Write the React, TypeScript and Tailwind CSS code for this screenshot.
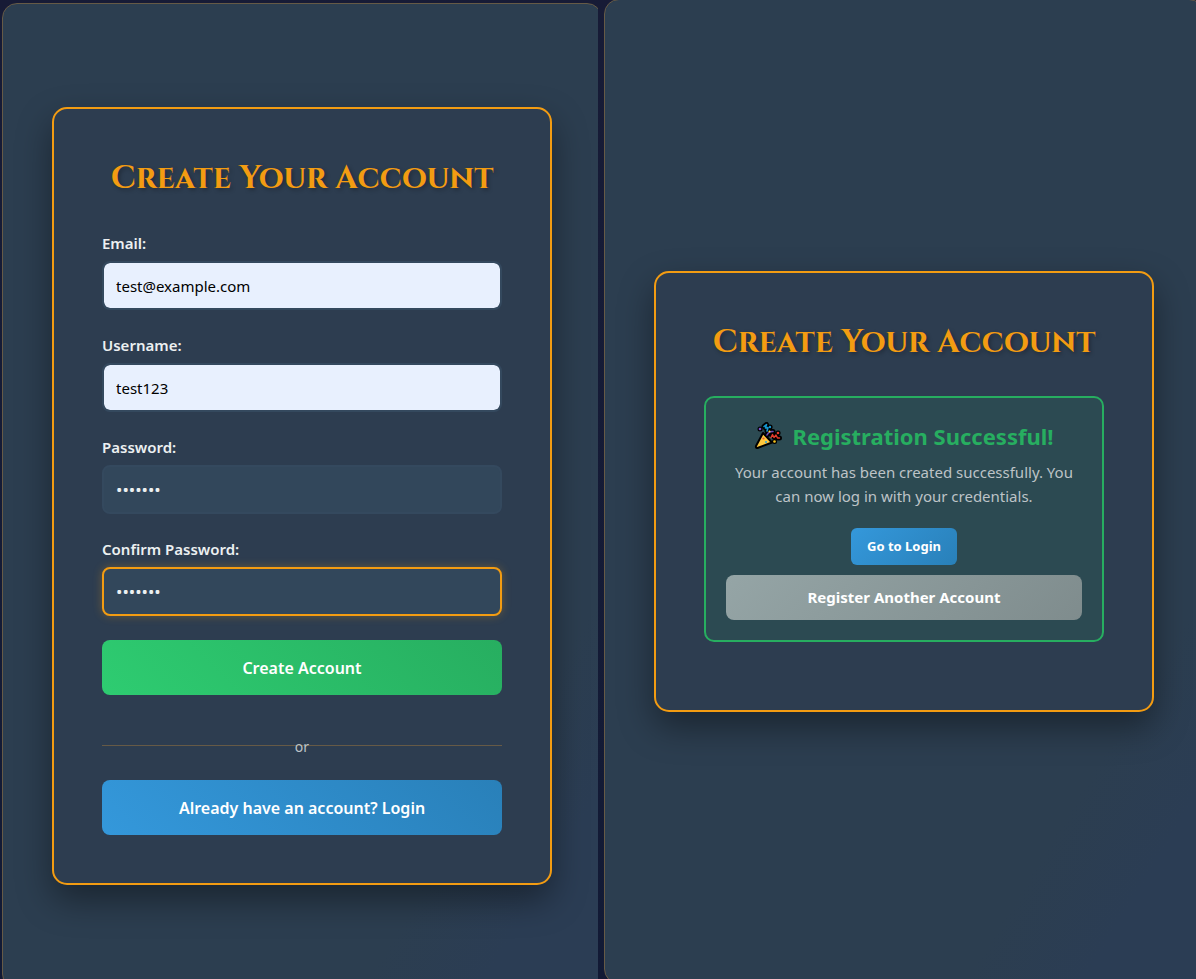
import type { ReactNode } from "react";

function Title() {
  return (
    <h1 className="text-center font-['Cinzel','Liberation_Serif',serif] text-[32px] leading-11 font-bold whitespace-nowrap text-[#f39c12] [text-shadow:2px_2px_4px_rgba(0,0,0,0.3)]">
      Create Your Account
    </h1>
  );
}

function Card({ children }: { children: ReactNode }) {
  return (
    <main className="w-full max-w-[500px] rounded-[15px] border-2 border-[#f39c12] bg-[#2d3d50] p-12 shadow-[0_15px_35px_rgba(0,0,0,0.4)]">
      <Title />
      {children}
    </main>
  );
}

function Panel({ className, children }: { className: string; children: ReactNode }) {
  return (
    <section
      className={`flex flex-1 items-center justify-center rounded-[15px] border border-[#665a46] bg-linear-to-br from-[#2c3e50] from-80% to-[#2b3d54] to-90% px-4 ${className}`}
    >
      {children}
    </section>
  );
}

type FieldProps = { id: string; label: string; type: string; value: string; look: string };

function Field({ id, label, type, value, look }: FieldProps) {
  return (
    <div className="mb-6">
      <label htmlFor={id} className="mb-[7px] block text-[15px] leading-[22px] font-semibold text-[#ecf0f1]">
        {label}
      </label>
      <input
        id={id}
        type={type}
        defaultValue={value}
        className={`block h-[49px] w-full rounded-lg border-2 px-3 outline-none ${look}`}
      />
    </div>
  );
}

const filled = "border-[#34495e] bg-[#e8f0fe] bg-clip-padding text-[15px] text-black";
const plain = "border-[#34495e] bg-[#32475b] text-[17px] text-[#ecf0f1]";
const active = "border-[#f39c12] bg-[#32475b] text-[17px] text-[#ecf0f1] shadow-[0_0_10px_rgba(243,156,18,0.3)]";

function PartyPopper() {
  return (
    <svg viewBox="0 0 28 28" className="size-7 shrink-0" aria-hidden="true">
      <g strokeLinecap="round" strokeLinejoin="round" fill="none">
        <g stroke="#000" strokeWidth="5">
          <path d="M10 4.5 12.5 2.5 11.5 6 14 5.5 13 9" />
          <path d="M17 12.5 19 11 20 15 22.5 13 23.5 16 25.5 16" />
          <path d="M13 13q2-4 6-3.500M6 7h.1M16 5h.1M15.500 9.500h.1M20.500 19.500h.1M24 11h.1" />
        </g>
        <path d="M9 11 18 20.500 3.500 26Q1.500 26.500 2 24Z" fill="#ffc83d" stroke="#000" strokeWidth="2" />
        <path d="M10 4.500 12.500 2.500 11.500 6 14 5.500 13 9" stroke="#1596cf" strokeWidth="1.600" />
        <path d="M17 15.500 18.500 12.500 20 15.500 22 13 23.500 16 25.500 16" stroke="#e43b2c" strokeWidth="1.400" />
        <path d="M13 13q2-4 6-3.500" stroke="#6b4bb5" strokeWidth="1.600" />
      </g>
      <circle cx="6" cy="7" r="1.300" fill="#7651c8" />
      <circle cx="16" cy="5" r="1.200" fill="#1596cf" />
      <circle cx="15.500" cy="9.500" r="1" fill="#ffe03a" />
      <circle cx="20.500" cy="19.500" r="1.300" fill="#f7c51d" />
      <circle cx="24" cy="11" r="1.300" fill="#e43b2c" />
      <circle cx="9.500" cy="16.500" r="1.100" fill="#e85b3d" />
      <circle cx="12" cy="20" r="1.100" fill="#33a9dc" />
    </svg>
  );
}

export default function App() {
  return (
    <div className="grid h-screen grid-cols-2 overflow-hidden bg-linear-to-b from-[#171b36] to-[#121a35] font-['Segoe_UI','Noto_Sans',sans-serif]">
      <div className="flex min-w-0 overflow-hidden pl-0.5">
        <Panel className="mt-[3px] -mr-1 -mb-[10px]">
          <Card>
            <form className="mt-[31px]" onSubmit={(event) => event.preventDefault()}>
              <Field id="email" label="Email:" type="email" value="test@example.com" look={filled} />
              <Field id="username" label="Username:" type="text" value="test123" look={filled} />
              <Field id="password" label="Password:" type="password" value="test123" look={plain} />
              <Field id="confirm" label="Confirm Password:" type="password" value="test123" look={active} />
              <button
                type="submit"
                className="block h-[55px] w-full rounded-lg bg-linear-[45deg] from-[#2ecc71] to-[#27ae60] text-base font-semibold text-white"
              >
                Create Account
              </button>
              <div className="relative mt-[50px] mb-[34px] h-px bg-[#665a46]">
                <span className="absolute inset-x-0 -top-2 text-center text-sm leading-5 text-[#bdc3c7]">or</span>
              </div>
              <button
                type="button"
                className="block h-[55px] w-full rounded-lg bg-linear-[45deg] from-[#3498db] to-[#2980b9] text-base font-semibold text-white"
              >
                Already have an account? Login
              </button>
            </form>
          </Card>
        </Panel>
      </div>
      <div className="flex min-w-0 overflow-hidden pl-1.5">
        <Panel className="-mt-px -mr-2 -mb-[5px]">
          <Card>
            <div className="mt-[31px] mb-5 flex flex-col items-center rounded-[10px] border-2 border-[#27ae60] bg-[#27ae60]/12 p-5">
              <h2 className="flex h-9 items-center gap-[10px] text-[22px] font-bold whitespace-nowrap text-[#27ae60]">
                <PartyPopper />
                Registration Successful!
              </h2>
              <p className="mt-1.5 text-center text-[15px] leading-6 text-[#bdc3c7]">
                Your account has been created successfully. You can now log in with your credentials.
              </p>
              <button
                type="button"
                className="mt-5 h-[37px] rounded-md bg-linear-[135deg] from-[#3498db] to-[#2980b9] px-4 text-[13px] font-bold text-white"
              >
                Go to Login
              </button>
              <button
                type="button"
                className="mt-2.5 h-[45px] w-full rounded-lg bg-linear-[135deg] from-[#95a5a6] to-[#7f8c8d] text-[15px] font-bold text-white"
              >
                Register Another Account
              </button>
            </div>
          </Card>
        </Panel>
      </div>
    </div>
  );
}
